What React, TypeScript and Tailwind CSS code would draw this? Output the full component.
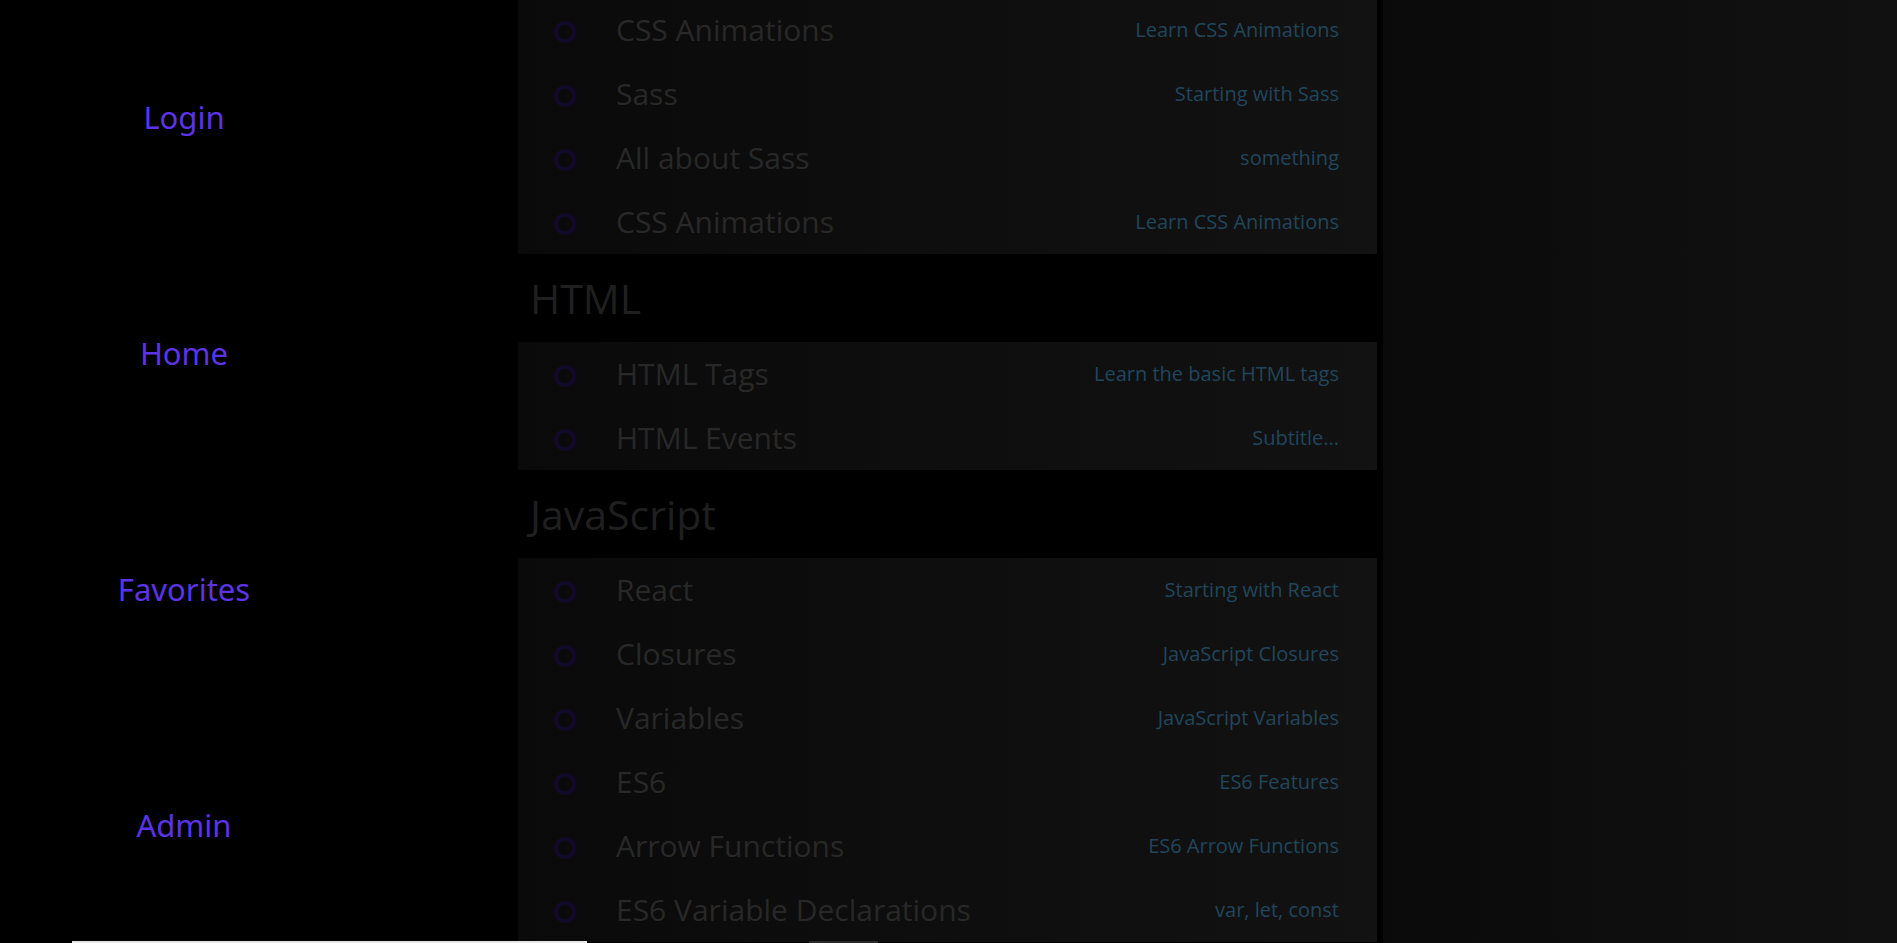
import React from "react";

type Item = { title: string; sub: string };

const groups: { name?: string; items: Item[] }[] = [
  {
    items: [
      { title: "CSS Animations", sub: "Learn CSS Animations" },
      { title: "Sass", sub: "Starting with Sass" },
      { title: "All about Sass", sub: "something" },
      { title: "CSS Animations", sub: "Learn CSS Animations" },
    ],
  },
  {
    name: "HTML",
    items: [
      { title: "HTML Tags", sub: "Learn the basic HTML tags" },
      { title: "HTML Events", sub: "Subtitle..." },
    ],
  },
  {
    name: "JavaScript",
    items: [
      { title: "React", sub: "Starting with React" },
      { title: "Closures", sub: "JavaScript Closures" },
      { title: "Variables", sub: "JavaScript Variables" },
      { title: "ES6", sub: "ES6 Features" },
      { title: "Arrow Functions", sub: "ES6 Arrow Functions" },
      { title: "ES6 Variable Declarations", sub: "var, let, const" },
    ],
  },
];

function Row({ item }: { item: Item }) {
  return (
    <div className="flex h-[64px] items-center pr-[38px]">
      <div className="flex w-[98px] shrink-0 items-center pl-[36px] pt-[4px]">
        <div className="h-[22px] w-[22px] rounded-full border-[4px] border-[#120a2a]" />
      </div>
      <div className="flex-1 text-[30px] leading-none text-[#282828]">{item.title}</div>
      <div className="text-[20px] leading-none text-[#21465c]">{item.sub}</div>
    </div>
  );
}

export default function App() {
  return (
    <div
      className="relative flex h-[943px] w-full overflow-hidden bg-black"
      style={{ fontFamily: '"Open Sans", "Noto Sans", sans-serif' }}
    >
      <nav className="flex w-[518px] shrink-0">
        <div className="flex w-[368px] flex-col">
          {["Login", "Home", "Favorites", "Admin"].map((l) => (
            <div key={l} className="flex flex-1 items-center justify-center">
              <a
                className="text-[31px] leading-none text-[#5c34e6]"
                style={{ fontFamily: '"Noto Sans", sans-serif' }}
              >
                {l}
              </a>
            </div>
          ))}
        </div>
      </nav>
      <main className="w-[859px] shrink-0">
        <div className="-mt-[2px]">
          {groups.map((g, i) => (
            <section key={i}>
              {g.name && (
                <div className="flex h-[88px] items-center bg-black pl-[12px] text-[41px] leading-none text-[#1f1f1f]">
                  {g.name}
                </div>
              )}
              <div className="bg-gradient-to-r from-[#0a0a0a] to-[#121212]">
                {g.items.map((it, j) => (
                  <Row key={j} item={it} />
                ))}
              </div>
            </section>
          ))}
        </div>
      </main>
      <div className="ml-[6px] flex-1 bg-gradient-to-r from-[#0a0a0a] via-[#0e0e0e] to-[#111111]" />
      <div className="absolute bottom-0 left-[72px] h-[2px] w-[515px] bg-[#e6e6e6]" />
      <div className="absolute bottom-0 left-[809px] h-[2px] w-[69px] bg-[#2a2a2a]" />
    </div>
  );
}
